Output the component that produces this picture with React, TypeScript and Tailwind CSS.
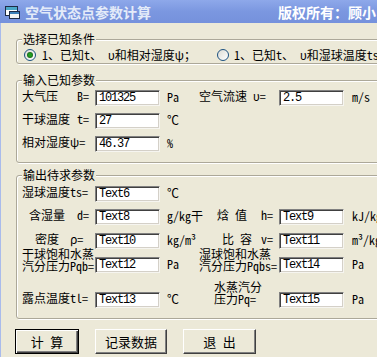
import React from "react";

const cjk = "[font-family:'Noto_Sans_Mono_CJK_SC','Noto_Sans_CJK_SC',sans-serif]";
const mono = "[font-family:'Liberation_Mono',monospace]";

const Field: React.FC<{ value: string }> = ({ value }) => (
  <div
    className={`h-[16px] w-[65px] shrink-0 bg-white border border-t-[#808080] border-l-[#808080] border-b-[#f6f5f0] border-r-[#f6f5f0] shadow-[inset_1px_1px_0_#404040,inset_-1px_-1px_0_#d4d0c8] pl-[3px] text-[12px] leading-[15px] tracking-[-1.2px] text-black ${mono}`}
  >
    {value}
  </div>
);

const Group: React.FC<{ title: string; className: string; children: React.ReactNode }> = ({
  title,
  className,
  children,
}) => (
  <fieldset
    className={`w-[420px] ml-[15px] border border-[#aca899] rounded-[3px] shadow-[1px_1px_0_#fff,inset_1px_1px_0_#fff] ${className}`}
  >
    <legend className="ml-[5px] px-[1px] bg-[#ece9d8] text-[12px] leading-[14px]">{title}</legend>
    {children}
  </fieldset>
);

const Radio: React.FC<{ checked?: boolean }> = ({ checked }) => (
  <div className="w-[12px] h-[12px] shrink-0 rounded-full border border-[#1c5180] bg-linear-to-br from-[#dcdcd5] to-white flex items-center justify-center">
    {checked && <div className="w-[4px] h-[4px] rounded-full bg-[#21a121] shadow-[0_0_0_1px_#1f6e1f]" />}
  </div>
);

const WinIcon = () => (
  <svg width="15" height="13" viewBox="0 0 15 13">
    <rect x="0.5" y="0.5" width="12" height="9" fill="#fff" stroke="#1f2a44" />
    <rect x="1" y="1" width="11" height="3" fill="#4aa7c7" />
    <rect x="4.5" y="5.5" width="10" height="7" fill="#f4f4f4" stroke="#1f2a44" />
    <rect x="5" y="6" width="9" height="2" fill="#3c7fb8" />
  </svg>
);

const Btn: React.FC<{ text: string; w: string; isDefault?: boolean }> = ({ text, w, isDefault }) => (
  <button
    className={`${w} h-[25px] bg-[#ece9d8] text-[13px] leading-[14px] text-black ${
      isDefault
        ? "border border-black shadow-[inset_1px_1px_0_#fff,inset_-1px_-1px_0_#404040,inset_-2px_-2px_0_#808080]"
        : "border border-t-white border-l-white border-b-[#404040] border-r-[#404040] shadow-[inset_-1px_-1px_0_#808080]"
    }`}
  >
    {text}
  </button>
);

export default function App() {
  return (
    <div className={`w-[377px] h-[357px] overflow-hidden flex flex-col bg-[#ece9d8] text-black ${cjk}`}>
      {/* title bar */}
      <div className="h-[23px] shrink-0 flex items-center bg-linear-to-b from-[#8ea8ea] via-[#7b97e0] to-[#7591dc] text-[#e4ebf9] font-bold text-[14px] leading-[16px] whitespace-nowrap">
        <div className="ml-[5px] mt-[2px] w-[15px]">
          <WinIcon />
        </div>
        <span className="ml-[5px] w-[253px]">空气状态点参数计算</span>
        <span className="text-white">版权所有：顾小</span>
      </div>

      <div className="flex flex-1">
        <div className="w-[4px] bg-[#7c97e0] border-r border-[#a9bbec]" />
        <div className="flex-1 flex flex-col text-[12px] leading-[14px] whitespace-nowrap">
          {/* group 1 */}
          <Group title="选择已知条件" className="mt-[9px] h-[32px]">
            <div className="mt-[2px] h-[14px] flex items-center pl-[7px]">
              <Radio checked />
              <span className="ml-[6px] w-[175px]">1、已知t、 υ和相对湿度ψ；</span>
              <Radio />
              <span className="ml-[5px]">1、已知t、 υ和湿球温度ts</span>
            </div>
          </Group>

          {/* group 2 */}
          <Group title="输入已知参数" className="mt-[9px] h-[90px]">
            <div className="pl-[5px] flex flex-col">
              <div className="mt-[3px] flex items-start">
                <span className="w-[55px] -mt-[1px]">大气压</span>
                <span className="w-[18px] -mt-[1px]">B=</span>
                <Field value="101325" />
                <span className="ml-[7px] w-[32px]">Pa</span>
                <span className="w-[80px] -mt-[1px]">空气流速 υ=</span>
                <Field value="2.5" />
                <span className="ml-[8px]">m/s</span>
              </div>
              <div className="mt-[7px] flex items-start">
                <span className="w-[55px] -mt-[1px]">干球温度</span>
                <span className="w-[18px] -mt-[1px]">t=</span>
                <Field value="27" />
                <span className="ml-[7px]">℃</span>
              </div>
              <div className="mt-[7px] flex items-start">
                <span className="w-[73px] -mt-[1px]">相对湿度ψ=</span>
                <Field value="46.37" />
                <span className="ml-[7px]">%</span>
              </div>
            </div>
          </Group>

          {/* group 3 */}
          <Group title="输出待求参数" className="mt-[5px] h-[151px]">
            <div className="pl-[5px] flex flex-col">
              <div className="mt-[4px] flex items-start">
                <span className="w-[73px] -mt-[1px]">湿球温度ts=</span>
                <Field value="Text6" />
                <span className="ml-[7px]">℃</span>
              </div>
              <div className="mt-[7px] flex items-start">
                <span className="w-[55px] pl-[7px] -mt-[1px]">含湿量</span>
                <span className="w-[18px] -mt-[1px]">d=</span>
                <Field value="Text8" />
                <span className="ml-[7px] w-[32px]">g/kg干</span>
                <span className="w-[62px] pl-[18px] -mt-[1px]">焓 值</span>
                <span className="w-[18px] -mt-[1px]">h=</span>
                <Field value="Text9" />
                <span className="ml-[8px]">kJ/kg</span>
              </div>
              <div className="mt-[8px] flex items-start">
                <span className="w-[48px] pl-[13px] -mt-[1px]">密度</span>
                <span className="w-[25px] -mt-[1px]">ρ=</span>
                <Field value="Text10" />
                <span className="ml-[7px] w-[32px]">kg/m³</span>
                <span className="w-[62px] pl-[23px] -mt-[1px]">比 容</span>
                <span className="w-[18px] -mt-[1px]">v=</span>
                <Field value="Text11" />
                <span className="ml-[8px]">m³/kg</span>
              </div>
              <div className="mt-[8px] flex items-start">
                <div className="w-[73px] -mt-[9px] flex flex-col leading-[12px]">
                  <span>干球饱和水蒸</span>
                  <span>汽分压力Pqb=</span>
                </div>
                <Field value="Text12" />
                <span className="ml-[7px] w-[32px]">Pa</span>
                <div className="w-[80px] -mt-[9px] flex flex-col leading-[12px]">
                  <span>湿球饱和水蒸</span>
                  <span>汽分压力Pqbs=</span>
                </div>
                <Field value="Text14" />
                <span className="ml-[8px]">Pa</span>
              </div>
              <div className="mt-[19px] flex items-start">
                <span className="w-[73px] -mt-[1px]">露点温度tl=</span>
                <Field value="Text13" />
                <span className="ml-[7px] w-[32px]">℃</span>
                <div className="w-[80px] pl-[15px] -mt-[11px] flex flex-col leading-[12px]">
                  <span>水蒸汽分</span>
                  <span>压力Pq=</span>
                </div>
                <Field value="Text15" />
                <span className="ml-[8px]">Pa</span>
              </div>
            </div>
          </Group>

          {/* buttons */}
          <div className="mt-[10px] ml-[14px] flex items-center gap-[16px]">
            <Btn text="计 算" w="w-[64px]" isDefault />
            <Btn text="记录数据" w="w-[72px]" />
            <Btn text="退 出" w="w-[73px]" />
          </div>
        </div>
      </div>
    </div>
  );
}
